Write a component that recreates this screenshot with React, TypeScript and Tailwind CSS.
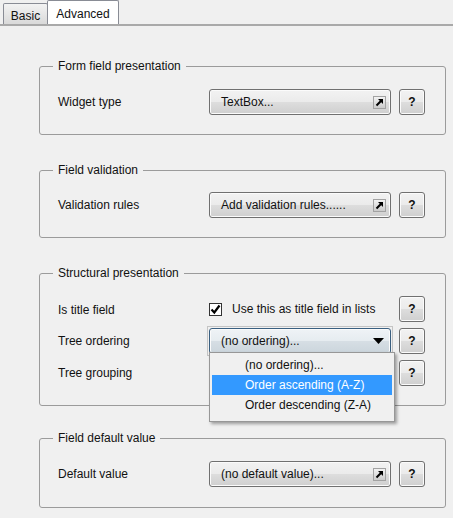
import React from "react";

const btnBg =
  "bg-[linear-gradient(180deg,#f2f2f2_0%,#ebebeb_48%,#dddddd_52%,#cfcfcf_100%)]";

function LinkIcon() {
  return (
    <svg width="13" height="13" viewBox="0 0 13 13" className="block">
      <defs>
        <linearGradient id="lg" x1="0" y1="0" x2="0" y2="1">
          <stop offset="0" stopColor="#f4f4f4" />
          <stop offset="1" stopColor="#c9c9c9" />
        </linearGradient>
      </defs>
      <rect x="0.5" y="0.5" width="12" height="12" fill="url(#lg)" stroke="#a2a2a2" />
      <path d="M3.5 9.5 L8.2 4.8" stroke="#000" strokeWidth="2" />
      <polygon points="5,3 10,3 10,8" fill="#000" />
    </svg>
  );
}

function BigButton({ text }: { text: string }) {
  return (
    <div
      className={`h-[26px] w-[182px] rounded-[3px] border border-[#707070] ${btnBg} shadow-[inset_0_0_0_1px_#fbfbfb] flex items-center pl-[11px] pr-[4px]`}
    >
      <span className="flex-1 text-[12px] text-[#111]">{text}</span>
      <span>
        <LinkIcon />
      </span>
    </div>
  );
}

function HelpButton() {
  return (
    <div
      className={`h-[26px] w-[26px] rounded-[3px] border border-[#707070] ${btnBg} shadow-[inset_0_0_0_1px_#fbfbfb] flex items-center justify-center text-[12px] font-bold text-[#111]`}
    >
      ?
    </div>
  );
}

function Group({
  title,
  children,
  className,
}: {
  title: string;
  children: React.ReactNode;
  className: string;
}) {
  return (
    <fieldset
      className={`ml-[39px] w-[407px] rounded-[3px] border border-[#9b9b9b] p-0 ${className}`}
    >
      <legend className="ml-[13px] px-[5px] h-[16px] leading-[16px] text-[12px] text-[#111]">
        {title}
      </legend>
      {children}
    </fieldset>
  );
}

function Row({
  label,
  control,
  className = "",
  labelClass = "",
}: {
  label: string;
  control: React.ReactNode;
  className?: string;
  labelClass?: string;
}) {
  return (
    <div className={`flex items-center pl-[18px] ${className}`}>
      <div className={`w-[151px] text-[12px] text-[#111] ${labelClass}`}>{label}</div>
      <div className="w-[182px]">{control}</div>
      <div className="ml-[8px]">
        <HelpButton />
      </div>
    </div>
  );
}

export default function App() {
  return (
    <div className="relative w-[453px] h-[518px] overflow-hidden bg-[#f0f0f0] font-['Liberation_Sans','Arial',sans-serif]">
      {/* Tabs */}
      <div className="flex h-[24px] items-end">
        <div className="ml-[3px] h-[21px] w-[45px] rounded-t-[2px] border border-b-0 border-[#898c95] bg-[linear-gradient(180deg,#f3f3f3,#e6e6e6_50%,#d9d9d9)] flex items-center justify-center pt-[4px] text-[12px] text-[#111]">
          Basic
        </div>
        <div className="-ml-px h-[24px] w-[72px] rounded-t-[2px] border border-b-0 border-[#898c95] bg-white flex items-center justify-center pt-[2px] text-[12px] text-[#111]">
          Advanced
        </div>
      </div>
      <div className="h-[2px] bg-[#a9a9a9]" />

      <Group title="Form field presentation" className="mt-[32px]">
        <div className="pt-[15px] pb-[19px]">
          <Row label="Widget type" control={<BigButton text="TextBox..." />} />
        </div>
      </Group>

      <Group title="Field validation" className="mt-[27px]">
        <div className="pt-[14px] pb-[19px]">
          <Row
            label="Validation rules"
            control={<BigButton text="Add validation rules......" />}
          />
        </div>
      </Group>

      <Group title="Structural presentation" className="mt-[27px]">
        <div className="pt-[15px] pb-[19px]">
          <Row
            label="Is title field"
            labelClass="pt-[2px]"
            control={
              <div className="flex items-center">
                <div className="h-[13px] w-[13px] border border-[#333] bg-white flex items-center justify-center">
                  <svg width="11" height="11" viewBox="0 0 11 11">
                    <path
                      d="M1.5 5.5 L4.3 8.5 L9.5 1.5"
                      fill="none"
                      stroke="#000"
                      strokeWidth="2.2"
                    />
                  </svg>
                </div>
                <span className="ml-[10px] whitespace-nowrap text-[12px] text-[#111]">
                  Use this as title field in lists
                </span>
              </div>
            }
          />
          <Row
            className="mt-[6px]"
            label="Tree ordering"
            control={
              <div className="-m-[2px] border border-[#c4c4c4] p-px">
                <div className="h-[26px] rounded-[3px] border border-[#3a5f80] bg-[linear-gradient(180deg,#eff3f6_0%,#e6ecf0_48%,#d6dee4_52%,#cbd5dc_100%)] shadow-[inset_0_0_0_1px_#fbfbfb] flex items-center pl-[11px] pr-[6px]">
                  <span className="flex-1 text-[12px] text-[#111]">
                    (no ordering)...
                  </span>
                  <svg width="11" height="6" viewBox="0 0 11 6">
                    <polygon points="0,0 11,0 5.5,6" fill="#000" />
                  </svg>
                </div>
              </div>
            }
          />
          <Row className="mt-[6px]" label="Tree grouping" control={<div className="h-[26px]" />} />
        </div>
      </Group>

      <Group title="Field default value" className="mt-[24px]">
        <div className="pt-[15px] pb-[20px]">
          <Row
            label="Default value"
            control={<BigButton text="(no default value)..." />}
          />
        </div>
      </Group>

      {/* Dropdown popup */}
      <div className="absolute left-[209px] top-[352px] w-[186px] h-[70px] border border-[#979797] bg-[#f0f0f0] shadow-[2px_2px_3px_rgba(0,0,0,0.35)] p-[2px] text-[12px]">
        <div className="h-[20px] flex items-center pl-[33px] text-[#111]">
          (no ordering)...
        </div>
        <div className="h-[20px] flex items-center pl-[33px] bg-[#3399ff] text-white">
          Order ascending (A-Z)
        </div>
        <div className="h-[20px] flex items-center pl-[33px] text-[#111]">
          Order descending (Z-A)
        </div>
      </div>
    </div>
  );
}
